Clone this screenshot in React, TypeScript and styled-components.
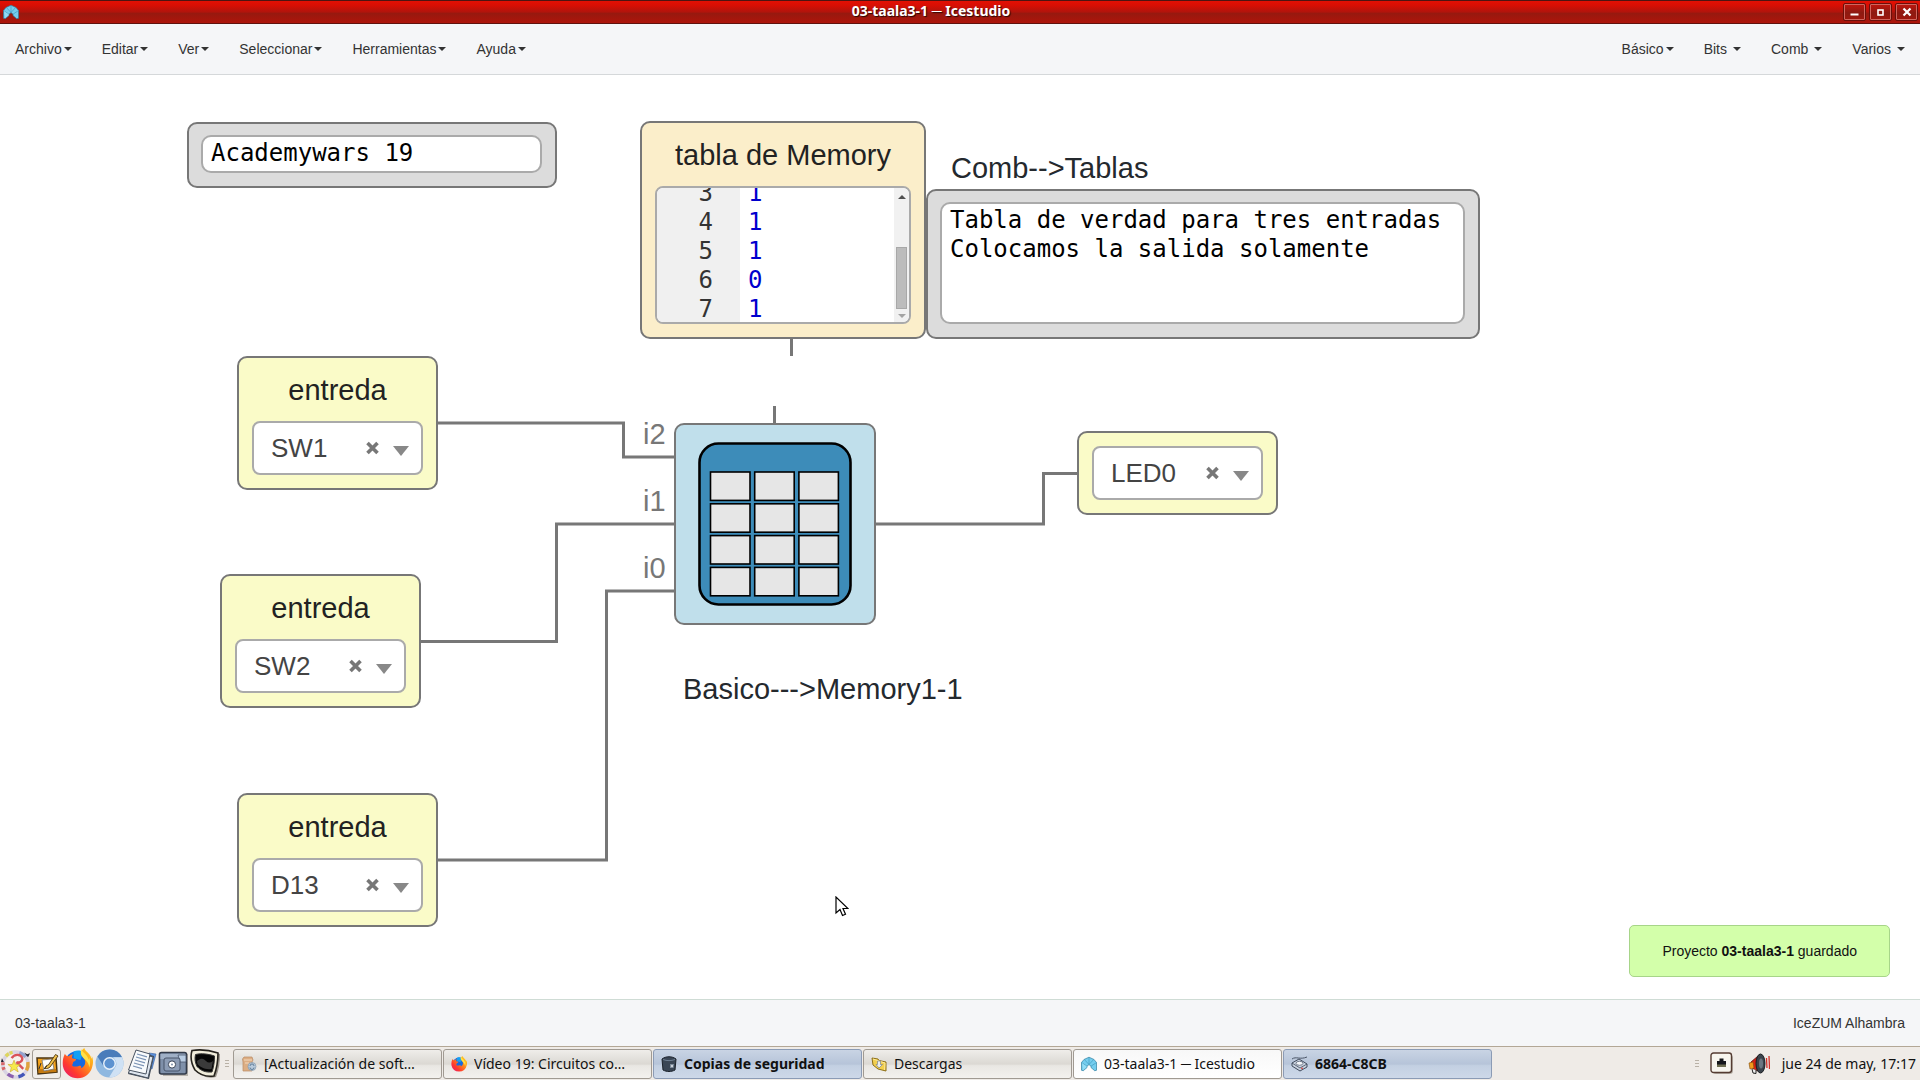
import React from "react";
import styled, { createGlobalStyle, css } from "styled-components";

const GlobalStyle = createGlobalStyle`
  *, *::before, *::after { box-sizing: border-box; }
  body { margin: 0; background: #fff; }
  button, select, textarea { font: inherit; color: inherit; }
`;

const UI_FONT = `"Noto Sans", "Open Sans", sans-serif`;
const APP_FONT = `"Liberation Sans", Arial, sans-serif`;
const CODE_FONT = `"DejaVu Sans Mono", monospace`;

/* ---------- window ---------- */

const Desktop = styled.div`
  display: flex;
  flex-direction: column;
  height: 100vh;
  min-height: 600px;
  font-family: ${APP_FONT};
  font-size: 14px;
  line-height: 20px;
  color: #333;
`;

const TitleBar = styled.header`
  display: flex;
  align-items: center;
  flex: none;
  height: 24px;
  padding: 0 2px 0 3px;
  border-top: 1px solid #4d1512;
  border-bottom: 1px solid #5f120e;
  background: linear-gradient(#e31003 0%, #d80f04 20%, #b1140c 50%, #97190f 56%, #ae140a 100%);
`;

const WindowTitle = styled.h1`
  flex: 1;
  margin: 0;
  padding-bottom: 2px;
  text-align: center;
  font: bold 14px/20px ${UI_FONT};
  color: #fff;
  text-shadow: 1px 1px 1px #2b0502;
`;

const WindowButtons = styled.div`
  display: flex;
  justify-content: flex-end;
  gap: 3px;
`;

const WindowButton = styled.button`
  display: flex;
  align-items: center;
  justify-content: center;
  width: 23px;
  height: 18px;
  padding: 0;
  border: 1px solid #6b0f0a;
  border-radius: 2px;
  background: linear-gradient(#c2160d, #8c1a12 55%, #a2170d);
  box-shadow: inset 0 0 0 1px #d0665e;
`;

const MenuBar = styled.nav`
  display: flex;
  justify-content: space-between;
  flex: none;
  height: 51px;
  background: #f5f6f8;
  border-bottom: 1px solid #d5d8da;
`;

const MenuGroup = styled.div`
  display: flex;
`;

const MenuButton = styled.button<{ $spaced?: boolean }>`
  display: flex;
  align-items: center;
  gap: ${(p) => (p.$spaced ? 6 : 2)}px;
  padding: 0 15px;
  border: 0;
  background: none;
  &::after {
    content: "";
    border: 4px solid transparent;
    border-top-color: currentColor;
    border-bottom: 0;
  }
`;

const Canvas = styled.main`
  position: relative;
  flex: 1;
  min-height: 0;
  overflow: hidden;
  background: #fff;
`;

const StatusBar = styled.footer`
  display: flex;
  align-items: center;
  justify-content: space-between;
  flex: none;
  height: 47px;
  padding: 0 15px;
  background: #f5f6f8;
  border-top: 1px solid #cfdcd5;
`;

/* ---------- diagram ---------- */

const Wires = styled.svg`
  position: absolute;
  inset: 0;
  width: 100%;
  height: 100%;
  fill: none;
  stroke: #777;
  stroke-width: 3;
`;

const at = css<{ $x: number; $y: number }>`
  position: absolute;
  left: ${(p) => p.$x}px;
  top: ${(p) => p.$y}px;
`;

const Block = styled.section<{ $x: number; $y: number; $w: number; $fill: string }>`
  ${at}
  display: flex;
  flex-direction: column;
  width: ${(p) => p.$w}px;
  padding: 13px;
  border: 2px solid #777;
  border-radius: 10px;
  background: ${(p) => p.$fill};
`;

const NoteBlock = styled(Block)`
  padding: 11px 13px 13px 12px;
`;

const BlockTitle = styled.h2`
  margin: 0 0 12px;
  font-size: 29px;
  font-weight: normal;
  line-height: 38px;
  text-align: center;
  color: #222;
`;

const CanvasLabel = styled.p<{ $x: number; $y: number; $tone?: string }>`
  ${at}
  margin: 0;
  font-size: 29px;
  line-height: 38px;
  white-space: nowrap;
  color: ${(p) => p.$tone || "#24292e"};
`;

const Combo = styled.div`
  display: flex;
  align-items: center;
  gap: 14px;
  height: 54px;
  padding: 0 12px 0 17px;
  border: 2px solid #aaa;
  border-radius: 8px;
  background: #fff;
`;

const PinSelect = styled.select`
  flex: 1;
  min-width: 0;
  height: 50px;
  padding: 0;
  border: 0;
  appearance: none;
  background: none;
  font-size: 26px;
  color: #444;
`;

const ClearButton = styled.button`
  display: flex;
  padding: 0;
  border: 0;
  background: none;
`;

const NoteText = styled.textarea<{ $h: number }>`
  display: block;
  width: 100%;
  height: ${(p) => p.$h}px;
  padding: 2px 8px 0;
  border: 2px solid #aaa;
  border-radius: 10px;
  resize: none;
  overflow: hidden;
  background: #fff;
  font: 24px/29px ${CODE_FONT};
  color: #000;
`;

const Editor = styled.div`
  display: flex;
  height: 138px;
  overflow: hidden;
  border: 2px solid #aaa;
  border-radius: 8px;
  background: #fff;
  font: 24px/29px ${CODE_FONT};
`;

const Lines = styled.div<{ $gutter?: boolean }>`
  display: flex;
  flex-direction: column;
  justify-content: flex-end;
  flex: ${(p) => (p.$gutter ? "0 0 83px" : "1")};
  margin-bottom: -2px;
  padding: ${(p) => (p.$gutter ? "0 27px 0 0" : "0 0 0 8px")};
  text-align: ${(p) => (p.$gutter ? "right" : "left")};
  background: ${(p) => (p.$gutter ? "#f0f0f0" : "#fff")};
  color: ${(p) => (p.$gutter ? "#333" : "#0000cd")};
`;

const ScrollTrack = styled.div`
  display: flex;
  flex-direction: column;
  align-items: center;
  justify-content: space-between;
  width: 15px;
  padding: 7px 0 4px;
  background: #f1f1f1;
`;

const ScrollArrow = styled.span<{ $down?: boolean }>`
  border: 4px solid transparent;
  ${(p) =>
    p.$down
      ? "border-top-color: #a3a3a3; border-bottom: 0;"
      : "border-bottom-color: #505050; border-top: 0;"}
`;

const ScrollThumb = styled.span`
  width: 11px;
  height: 62px;
  margin: auto 0 5px;
  border: 1px solid #a8a8a8;
  background: #bcbcbc;
`;

const ChipBlock = styled(Block)`
  height: 202px;
  padding: 17px 22px;
`;

const Toast = styled.div`
  position: absolute;
  right: 30px;
  bottom: 22px;
  padding: 15px 32px;
  border: 1px solid #a7d589;
  border-radius: 5px;
  background: #d3ffaa;
  color: #111;
`;

const Pointer = styled.svg`
  position: absolute;
  left: 835px;
  top: 821px;
`;

/* ---------- desktop panel ---------- */

const Panel = styled.footer`
  display: flex;
  align-items: center;
  flex: none;
  height: 34px;
  border-top: 1px solid #b3a796;
  background: #efebe7;
  font: 14px/20px ${UI_FONT};
  color: #111;
`;

const Launchers = styled.div`
  display: flex;
  align-items: center;
  gap: 1px;
`;

const Launcher = styled.button<{ $framed?: boolean }>`
  display: flex;
  align-items: center;
  justify-content: center;
  width: ${(p) => (p.$framed ? 29 : 31)}px;
  height: 30px;
  padding: 0;
  border: ${(p) => (p.$framed ? "1px solid #a29c94" : "0")};
  border-radius: 3px;
  background: ${(p) => (p.$framed ? "#f1eeea" : "none")};
`;

const Grip = styled.span`
  width: 4px;
  height: 8px;
  margin: 0 4px;
  background: repeating-linear-gradient(#b9b1a6 0 1px, transparent 1px 3px);
`;

const Tasks = styled.div`
  display: flex;
  flex: 1;
  min-width: 0;
  gap: 1px;
`;

const shades = {
  plain: "linear-gradient(#efedea, #dbd8d3 50%, #e9e7e3 56%, #f3f1ee)",
  alert: "linear-gradient(#c9d4e4, #b6c4d9 50%, #c3d0e2 56%, #cdd8e8)",
  active: "linear-gradient(#f8f8f8, #ffffff)",
};

const Task = styled.button<{ $kind: keyof typeof shades }>`
  display: flex;
  align-items: center;
  gap: 7px;
  flex: 0 1 209px;
  min-width: 0;
  height: 30px;
  padding: 0 7px;
  border: 1px solid ${(p) => (p.$kind === "alert" ? "#8b9bb5" : "#a09a92")};
  border-radius: 3px;
  background: ${(p) => shades[p.$kind]};
  font-weight: ${(p) => (p.$kind === "alert" ? "bold" : "normal")};
  svg { flex: none; }
`;

const TaskText = styled.span`
  white-space: nowrap;
  overflow: hidden;
`;

const Tray = styled.div`
  display: flex;
  align-items: center;
  padding-right: 4px;
`;

const TrayButton = styled.button`
  display: flex;
  padding: 0;
  margin: 0 7px;
  border: 0;
  background: none;
`;

const Clock = styled.time`
  margin-left: 5px;
`;

/* ---------- drawings ---------- */

const IceLogo = ({ size = 16 }: { size?: number }) => (
  <svg width={size} height={size} viewBox="0 0 16 16" aria-hidden="true">
    <path d="M.5 6.500 3 3.500 8 1.200l5 2.300 2.500 3v7.800l-1.800.4-3.700-3.200V10.200L8 8.600l-2 1.600v1.300l-3.700 3.200-1.800-.4z" fill="#74cdee" stroke="#2f7fa0" strokeWidth=".7" />
    <path d="M8 1.500v7M.5 6.500 6 10.200M15.500 6.500 10 10.200M3.500 3.700 8 8.500l4.500-4.800" fill="none" stroke="#3a93b8" strokeWidth=".6" />
    <path d="M1 7 5.600 10.300v1L2.300 14z" fill="#a9e6f8" opacity=".6" />
  </svg>
);

const FirefoxIcon = ({ size }: { size: number }) => (
  <svg width={size} height={size} viewBox="0 0 32 32" aria-hidden="true">
    <defs>
      <linearGradient id="ffBody" x1="1" y1="0" x2="0" y2="1">
        <stop offset="0" stopColor="#ffe226" />
        <stop offset=".35" stopColor="#ff9a1a" />
        <stop offset=".7" stopColor="#ff3a2e" />
        <stop offset="1" stopColor="#e3137c" />
      </linearGradient>
    </defs>
    <circle cx="16" cy="16" r="13" fill="#1769e0" />
    <path d="M12 3.500c4-1.500 8-1 10 1l-3 8-7-2z" fill="#12a0f5" />
    <path d="M3 6c1 2 2 2.500 4 2.500 1-1 3-2 4.500-2-1 1-1.500 2.500-1 4l4 1c.5 1-1.500 2-3 3 0 2-1 2.500-1 3.500 2 2 5 1 7 .5 2.500-.5 3 1.500 1.500 2.500 4-1 6-5 4.500-9-1-2-3-3.500-4-6 0-3 2-5 3.500-6 1 4 6 5 7.500 11 .5-1 .3-2 .2-3 1.500 3 1.800 7 .6 11A15.500 15.500 0 0 1 1 19C.3 14 1 10 3 6z" fill="url(#ffBody)" />
    <path d="M20 1c1 4 6 5 7.500 11 .5-1 .3-2 .2-3 1.500 3 1.800 7 .6 11-1-5-3-7-6-9.500C20 8 18.500 5 20 1z" fill="#ffe14a" />
  </svg>
);

const GameIcon = () => (
  <svg width="31" height="30" viewBox="0 0 32 30" aria-hidden="true">
    <circle cx="16" cy="15.500" r="12.500" fill="#f6f1ec" />
    <g fill="none" strokeWidth="3.600">
      <circle cx="16" cy="15.500" r="13" stroke="#d9d3e2" />
      <path d="M6 7a13 13 0 0 1 7-4" stroke="#ded65d" strokeDasharray="4 1" />
      <path d="M20 3.200a13 13 0 0 1 6.500 4.500" stroke="#93a2cf" />
      <path d="M28.800 13a13 13 0 0 1-1.500 8.500" stroke="#e0a23c" />
      <path d="M25 25a13 13 0 0 1-6 3.200" stroke="#4356b8" />
      <path d="M14 28.300a13 13 0 0 1-6-3" stroke="#8b5fae" />
      <path d="M4.200 21a13 13 0 0 1-1-8" stroke="#d8686a" strokeDasharray="3 2" />
    </g>
    <path d="m2 9-1 4h3zM25 3l3 2 3-1-2 4-2-2z" fill="#223" />
    <path d="M12 9c3-5 10-4 11 0 .5 4-4 5-6 4l7 7" fill="none" stroke="#d9525a" strokeWidth="2.400" />
    <path d="m14.500 11 1.700 4.500h4.600l-3.500 3 1.500 4.700-4.300-2.700-4 2.700 1.200-4.700-3.500-3h4.500z" fill="#f6e94b" stroke="#caa32c" strokeWidth=".6" />
  </svg>
);

const EditorIcon = () => (
  <svg width="24" height="24" viewBox="0 0 24 24" aria-hidden="true">
    <path d="M2 6h19l1 14-19 2z" fill="#f5a31c" stroke="#4a3412" strokeWidth="1.500" />
    <path d="M4 17h17l.5 3L3.500 21z" fill="#c57a10" />
    <path d="m7 8 10-1 2 10-10 2z" fill="#fdfdfb" stroke="#777" strokeWidth=".8" />
    <path d="M9.500 16.500c1-2 2-4 3.500-3l7.500-11 2.500 1.500-8 11c-1 1-3 2-5.500 1.500z" fill="#f2c14a" stroke="#5a4216" />
    <path d="m6 11-2 6M9 17l3-3" stroke="#333" />
  </svg>
);

const ChromiumIcon = () => (
  <svg width="29" height="29" viewBox="0 0 29 29" aria-hidden="true">
    <circle cx="14.500" cy="14.500" r="14" fill="#8fb8e0" />
    <path d="M2.500 7.500A14 14 0 0 1 27 8.200H14.500L8.500 17z" fill="#4a7cba" />
    <path d="M27 8.200A14 14 0 0 1 14 28.500l7-11.500c1-3 0-6-3-8.800z" fill="#cfe1f4" />
    <circle cx="14.500" cy="14.500" r="6.500" fill="#e8f1fa" />
    <circle cx="14.500" cy="14.500" r="5" fill="#5c92d0" />
  </svg>
);

const PagesIcon = () => (
  <svg width="30" height="30" viewBox="0 0 30 30" aria-hidden="true">
    <path d="m22 4 7 1-4 15-6-1z" fill="#5b90dd" stroke="#385f9d" strokeWidth=".6" />
    <path d="m9 2 18 5-5 23L1 25z" fill="#3d4652" />
    <path d="m9 3 17 5-5 21L1.500 24z" fill="#dfe6ef" stroke="#4a5462" />
    <path d="m9 1 14 4-4 20L1.500 21z" fill="#f8fafc" stroke="#4a5462" />
    <path d="m10 5 10 2.800M9 8l10 2.800M8 11l10 2.800M7 14l10 2.800M6 17l9 2.600" stroke="#7b93b5" strokeWidth="1.200" />
  </svg>
);

const DriveIcon = () => (
  <svg width="31" height="28" viewBox="0 0 31 28" aria-hidden="true">
    <path d="M4 4h26v22H5z" fill="#b9b4ad" />
    <rect x="1.500" y="2.500" width="27" height="21.500" rx="2" fill="#7f90aa" stroke="#323a49" strokeWidth="1.600" />
    <path d="M2.500 4h25v5h-25z" fill="#9fafc6" />
    <path d="M20 5h8v7h-6z" fill="#b8cbe2" stroke="#49566c" strokeWidth=".8" />
    <rect x="6" y="8" width="16" height="13" rx="2" fill="#8c9cb5" stroke="#48546a" />
    <circle cx="14" cy="14.500" r="3.600" fill="#fff" stroke="#3c475a" />
    <circle cx="14" cy="14.500" r="1" fill="#7f90aa" />
  </svg>
);

const TerminalIcon = () => (
  <svg width="31" height="30" viewBox="0 0 31 30" aria-hidden="true">
    <path d="M4 3c8-3 16-1 26 2 0 8-1 16-4 23-8 2-15-1-20-6C2 16 1 9 4 3z" fill="#9a958c" />
    <path d="M2 1.500c9-1.500 17-.5 26 2.500 0 8-1 15-4 23-7 1-14-1-19-6C1 14 0 8 2 1.500z" fill="#f1eddb" stroke="#25221d" strokeWidth="1.600" />
    <path d="M5.500 5.500c6-1.500 13-.5 19 1.500 0 5-.5 10-2.500 16-6 .5-11-1-15-5.500-2-4-2.500-8-1.500-12z" fill="#060606" stroke="#333" />
    <path d="M7 12c5-4 7-2 9 0s4 2 7 0l-1.500 8C15 21 10 18 7.500 15z" fill="#3a3a3a" />
  </svg>
);

const UpdateIcon = () => (
  <svg width="16" height="16" viewBox="0 0 16 16" aria-hidden="true">
    <path d="M3 1h8l1 3-1 2v9H2V6L1.500 3z" fill="#dcae84" stroke="#b98a63" strokeWidth=".7" />
    <path d="M3 4h8M4 7h4" stroke="#f4d9bd" />
    <circle cx="11" cy="10.500" r="4" fill="#b8cadb" stroke="#8197ab" strokeWidth=".7" />
    <path d="M9 10a2 2 0 0 1 4 0M13 11.500a2 2 0 0 1-4 0" fill="none" stroke="#63809b" />
  </svg>
);

const SafeIcon = () => (
  <svg width="16" height="16" viewBox="0 0 16 16" aria-hidden="true">
    <path d="M1 3c4-3 10-3 14 0l-1 11c-4 2-8 2-12 0z" fill="#3a4655" stroke="#1b222b" />
    <path d="M2 3.500c4 1.500 8 1.500 12 0" fill="none" stroke="#6f8093" />
    <path d="M9 8h4l-.5 4H9z" fill="#7d8b9b" />
    <circle cx="11" cy="10" r="1" fill="#e4e9ee" />
  </svg>
);

const FolderIcon = () => (
  <svg width="16" height="16" viewBox="0 0 16 16" aria-hidden="true">
    <path d="m1 2 6 1 1 1.500 7 1.500v9l-8-2-5-4z" fill="#f2cf4d" stroke="#8d6f1a" />
    <path d="m2 3 12 4-.5 7" fill="none" stroke="#fbe99b" />
    <path d="M6.500 5h3v3.500h2L8 12 5 8.500h1.500z" fill="#e9edf1" stroke="#7c838a" strokeWidth=".7" />
  </svg>
);

const DiskIcon = () => (
  <svg width="17" height="16" viewBox="0 0 17 16" aria-hidden="true">
    <path d="M1 3c4-3 8 1 15-2" fill="none" stroke="#4b5668" />
    <path d="m1 7 7-4 8 5v3l-7 4-8-5z" fill="#c9d2df" stroke="#3f4a5c" />
    <path d="m1 7 8 5 7-4" fill="none" stroke="#3f4a5c" strokeWidth=".8" />
    <ellipse cx="8.500" cy="7.300" rx="3.500" ry="2" fill="#f4f6f9" stroke="#5c6779" strokeWidth=".8" />
    <circle cx="11" cy="12.300" r=".9" fill="#d9443f" />
  </svg>
);

const NetworkIcon = () => (
  <svg width="24" height="23" viewBox="0 0 24 23" aria-hidden="true">
    <rect x="3" y="3" width="20" height="19" rx="3" fill="#b7b1a8" />
    <rect x="1" y="1" width="20.500" height="19.500" rx="2.500" fill="#f8f6ef" stroke="#553c33" strokeWidth="1.400" />
    <path d="M7 15V9h2.500V6.500h4V9H16v6z" fill="#15171b" />
    <path d="M7 12.500h9V15H7z" fill="#6f6f52" />
  </svg>
);

const SpeakerIcon = () => (
  <svg width="22" height="22" viewBox="0 0 22 22" aria-hidden="true">
    <path d="m3 9 7-6 3 16-8-3z" fill="#d81f12" stroke="#5a120c" strokeWidth=".8" />
    <path d="m1 10 4-1 1 6-4 1z" fill="#f39a1d" stroke="#7e4b0b" strokeWidth=".6" />
    <ellipse cx="12.500" cy="10.500" rx="4.500" ry="9.500" fill="#3b434c" stroke="#181b1f" />
    <ellipse cx="13" cy="10.500" rx="2" ry="5" fill="#6b7681" />
    <path d="m4 16 1 4 3 .5L8 17" fill="#eee" stroke="#222" />
    <path d="m18.500 5 .5 10M21 3l.5 13" stroke="#d03028" strokeWidth="1.300" />
  </svg>
);

const TableIcon = () => (
  <svg width="154" height="164" viewBox="0 0 154 164" role="img" aria-label="Tabla de memoria">
    <rect x="1.500" y="1.500" width="151" height="161" rx="19" fill="#3d8cb9" stroke="#000" strokeWidth="2.600" />
    {[0, 1, 2, 3].map((r) =>
      [0, 1, 2].map((c) => (
        <rect
          key={`${r}-${c}`}
          x={12.500 + c * 44.200}
          y={30 + r * 31.800}
          width="39.500"
          height="28.400"
          fill="#e6e6e6"
          stroke="#000"
          strokeWidth="1.600"
        />
      ))
    )}
  </svg>
);

/* ---------- parts ---------- */

type PinProps = { x: number; y: number; title?: string; pin: string };

const PinBlock = ({ x, y, title, pin }: PinProps) => (
  <Block $x={x} $y={y} $w={201} $fill="#fafbc8">
    {title && <BlockTitle>{title}</BlockTitle>}
    <Combo>
      <PinSelect aria-label={`Pin ${pin}`} defaultValue={pin}>
        <option>{pin}</option>
      </PinSelect>
      <ClearButton aria-label={`Quitar ${pin}`}>
        <svg width="13" height="14" viewBox="0 0 13 14" aria-hidden="true">
          <path d="m1.500 2 10 10m0-10-10 10" stroke="#777" strokeWidth="3.600" />
        </svg>
      </ClearButton>
      <svg width="16" height="16" viewBox="0 0 16 16" aria-hidden="true">
        <path d="M0 6h16l-8 10z" fill="#888" />
      </svg>
    </Combo>
  </Block>
);

const leftMenus = ["Archivo", "Editar", "Ver", "Seleccionar", "Herramientas", "Ayuda"];
const rightMenus = ["Básico", "Bits", "Comb", "Varios"];

const memory = [
  { line: 3, value: 1 },
  { line: 4, value: 1 },
  { line: 5, value: 1 },
  { line: 6, value: 0 },
  { line: 7, value: 1 },
];

const launchers = [
  { name: "Menú", icon: <GameIcon /> },
  { name: "Editor", icon: <EditorIcon />, framed: true },
  { name: "Firefox", icon: <FirefoxIcon size={31} /> },
  { name: "Chromium", icon: <ChromiumIcon /> },
  { name: "Documentos", icon: <PagesIcon /> },
  { name: "Archivos", icon: <DriveIcon /> },
  { name: "Terminal", icon: <TerminalIcon /> },
];

const tasks: { text: string; kind: keyof typeof shades; icon: React.ReactNode }[] = [
  { text: "[Actualización de soft…", kind: "plain", icon: <UpdateIcon /> },
  { text: "Vídeo 19: Circuitos co…", kind: "plain", icon: <FirefoxIcon size={16} /> },
  { text: "Copias de seguridad", kind: "alert", icon: <SafeIcon /> },
  { text: "Descargas", kind: "plain", icon: <FolderIcon /> },
  { text: "03-taala3-1 ─ Icestudio", kind: "active", icon: <IceLogo /> },
  { text: "6864-C8CB", kind: "alert", icon: <DiskIcon /> },
];

export default function App() {
  return (
    <Desktop>
      <GlobalStyle />
      <TitleBar>
        <IceLogo />
        <WindowTitle>03-taala3-1 ─ Icestudio</WindowTitle>
        <WindowButtons>
          <WindowButton aria-label="Minimizar">
            <svg width="11" height="10" viewBox="0 0 11 10" aria-hidden="true">
              <path d="M1.500 7.500h8" stroke="#fff" strokeWidth="2" />
            </svg>
          </WindowButton>
          <WindowButton aria-label="Maximizar">
            <svg width="9" height="9" viewBox="0 0 9 9" aria-hidden="true">
              <rect x="2" y="2" width="5" height="5" fill="none" stroke="#fff" strokeWidth="1.600" />
            </svg>
          </WindowButton>
          <WindowButton aria-label="Cerrar">
            <svg width="10" height="10" viewBox="0 0 10 10" aria-hidden="true">
              <path d="m1.500 1.500 7 7m0-7-7 7" stroke="#fff" strokeWidth="2.200" />
            </svg>
          </WindowButton>
        </WindowButtons>
      </TitleBar>

      <MenuBar>
        <MenuGroup>
          {leftMenus.map((m) => (
            <MenuButton key={m}>{m}</MenuButton>
          ))}
        </MenuGroup>
        <MenuGroup>
          {rightMenus.map((m, i) => (
            <MenuButton key={m} $spaced={i > 0}>
              {m}
            </MenuButton>
          ))}
        </MenuGroup>
      </MenuBar>

      <Canvas>
        <Wires aria-hidden="true">
          <path d="M438 348H623.500V382H676" />
          <path d="M421 566.500H556.500V449H676" />
          <path d="M438 785H606.500V516H676" />
          <path d="M875 449H1043.500V398.500H1079" />
          <path d="M791.500 264V281M774.500 331V350" />
        </Wires>

        <NoteBlock $x={187} $y={47} $w={370} $fill="#dcdcdc">
          <NoteText $h={38} readOnly aria-label="Nota del proyecto" value="Academywars 19" />
        </NoteBlock>

        <Block $x={640} $y={46} $w={286} $fill="#fbeeca">
          <BlockTitle>tabla de Memory</BlockTitle>
          <Editor>
            <Lines $gutter>
              {memory.map((m) => (
                <span key={m.line}>{m.line}</span>
              ))}
            </Lines>
            <Lines>
              {memory.map((m) => (
                <span key={m.line}>{m.value}</span>
              ))}
            </Lines>
            <ScrollTrack>
              <ScrollArrow />
              <ScrollThumb />
              <ScrollArrow $down />
            </ScrollTrack>
          </Editor>
        </Block>

        <CanvasLabel $x={951} $y={74}>{"Comb-->Tablas"}</CanvasLabel>

        <NoteBlock $x={926} $y={114} $w={554} $fill="#dcdcdc">
          <NoteText
            $h={122}
            readOnly
            aria-label="Nota de la tabla"
            value={"Tabla de verdad para tres entradas\nColocamos la salida solamente"}
          />
        </NoteBlock>

        <PinBlock x={237} y={281} title="entreda" pin="SW1" />
        <PinBlock x={220} y={499} title="entreda" pin="SW2" />
        <PinBlock x={237} y={718} title="entreda" pin="D13" />
        <PinBlock x={1077} y={356} pin="LED0" />

        <CanvasLabel $x={643} $y={340} $tone="#777">i2</CanvasLabel>
        <CanvasLabel $x={643} $y={407} $tone="#777">i1</CanvasLabel>
        <CanvasLabel $x={643} $y={474} $tone="#777">i0</CanvasLabel>

        <ChipBlock $x={674} $y={348} $w={202} $fill="#c0dfeb">
          <TableIcon />
        </ChipBlock>

        <CanvasLabel $x={683} $y={595}>{"Basico--->Memory1-1"}</CanvasLabel>

        <Toast role="status">
          Proyecto <b>03-taala3-1</b> guardado
        </Toast>

        <Pointer width="14" height="22" viewBox="0 0 14 22" aria-hidden="true">
          <path d="M1 1v16l4-3.500 2.500 6 3-1.300L8 12.500h5z" fill="#fff" stroke="#000" strokeWidth="1.200" />
        </Pointer>
      </Canvas>

      <StatusBar>
        <span>03-taala3-1</span>
        <span>IceZUM Alhambra</span>
      </StatusBar>

      <Panel>
        <Launchers>
          {launchers.map((l) => (
            <Launcher key={l.name} aria-label={l.name} $framed={l.framed}>
              {l.icon}
            </Launcher>
          ))}
        </Launchers>
        <Grip />
        <Tasks>
          {tasks.map((t) => (
            <Task key={t.text} $kind={t.kind}>
              {t.icon}
              <TaskText>{t.text}</TaskText>
            </Task>
          ))}
        </Tasks>
        <Tray>
          <Grip />
          <TrayButton aria-label="Red">
            <NetworkIcon />
          </TrayButton>
          <TrayButton aria-label="Volumen">
            <SpeakerIcon />
          </TrayButton>
          <Clock>jue 24 de may, 17:17</Clock>
        </Tray>
      </Panel>
    </Desktop>
  );
}
